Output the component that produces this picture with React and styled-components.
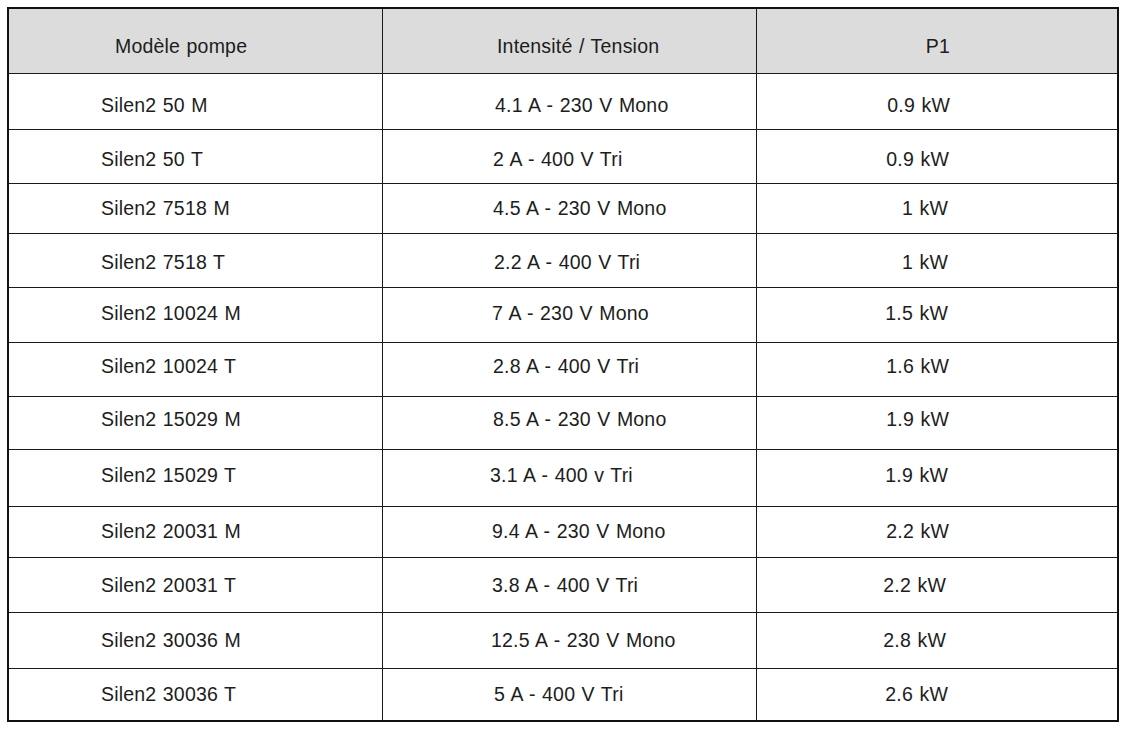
import React from 'react'
import styled, { createGlobalStyle } from 'styled-components'

const GlobalStyle = createGlobalStyle`
  html, body {
    margin: 0;
    padding: 0;
    background: #ffffff;
  }
`

// [model, intensity, power, row height, text nudge y, col2 nudge x, col3 nudge x]
const rows = [
    ['Silen2 50 M', '4.1 A - 230 V Mono', '0.9 kW', 56, 4, 3, 2],
    ['Silen2 50 T', '2 A - 400 V Tri', '0.9 kW', 54, 3, 1, 1],
    ['Silen2 7518 M', '4.5 A - 230 V Mono', '1 kW', 50, 0, 1, 0],
    ['Silen2 7518 T', '2.2 A - 400 V Tri', '1 kW', 54, 2, 2, 0],
    ['Silen2 10024 M', '7 A - 230 V Mono', '1.5 kW', 55, -2, 0, 0],
    ['Silen2 10024 T', '2.8 A - 400 V Tri', '1.6 kW', 54, -3, 1, 1],
    ['Silen2 15029 M', '8.5 A - 230 V Mono', '1.9 kW', 53, -4, 1, 1],
    ['Silen2 15029 T', '3.1 A - 400 v Tri', '1.9 kW', 57, -3, -2, 0],
    ['Silen2 20031 M', '9.4 A - 230 V Mono', '2.2 kW', 51, -1, 0, 1],
    ['Silen2 20031 T', '3.8 A - 400 V Tri', '2.2 kW', 55, 0, 0, -2],
    ['Silen2 30036 M', '12.5 A - 230 V Mono', '2.8 kW', 56, 0, -1, -2],
    ['Silen2 30036 T', '5 A - 400 V Tri', '2.6 kW', 51, 0, 2, 0],
]

const Page = styled.div`
  padding: 7px 0 0 7px;
  font-family: 'Liberation Sans', Arial, Helvetica, sans-serif;
  color: #1d1d1d;
`

const Table = styled.div`
  width: 1112px;
  box-sizing: border-box;
  border: 2px solid #111;
  display: grid;
  grid-template-columns: 374px 374px 360px;
  grid-template-rows: 65px ${rows.map(r => r[3] + 'px').join(' ')};
`

const Cell = styled.div`
  box-sizing: border-box;
  display: flex;
  align-items: center;
  justify-content: ${props => props.$align === 'right' ? 'flex-end' : 'flex-start'};
  padding-left: ${props => props.$padLeft || 0}px;
  padding-right: ${props => props.$padRight || 0}px;
  border-right: ${props => props.$last ? 'none' : '1px solid #1a1a1a'};
  border-bottom: ${props => props.$bottom ? 'none' : '1px solid #1a1a1a'};
  background: ${props => props.$head ? '#dcdcdc' : '#ffffff'};
  font-size: 19.5px;
  letter-spacing: 0.2px;
  word-spacing: 0.8px;
  white-space: nowrap;
`

const Text = styled.span`
  display: block;
  transform: translate(${props => props.$dx || 0}px, ${props => props.$dy || 0}px);
`

const TablePompe = () => {
    return (
        <Page>
            <GlobalStyle />
            <Table>
                <Cell $head $padLeft={106}>
                    <Text $dy={5}>Modèle pompe</Text>
                </Cell>
                <Cell $head $padLeft={114}>
                    <Text $dy={5}>Intensité / Tension</Text>
                </Cell>
                <Cell $head $last $align="right" $padRight={167}>
                    <Text $dy={5}>P1</Text>
                </Cell>
                {rows.map(([model, amp, power, h, dy, dx2, dx3], i) => {
                    const bottom = i === rows.length - 1
                    return (
                        <React.Fragment key={model}>
                            <Cell $bottom={bottom} $padLeft={92}>
                                <Text $dy={dy}>{model}</Text>
                            </Cell>
                            <Cell $bottom={bottom} $padLeft={109}>
                                <Text $dy={dy} $dx={dx2}>{amp}</Text>
                            </Cell>
                            <Cell $bottom={bottom} $last $align="right" $padRight={169}>
                                <Text $dy={dy} $dx={dx3}>{power}</Text>
                            </Cell>
                        </React.Fragment>
                    )
                })}
            </Table>
        </Page>
    )
}

export default TablePompe
